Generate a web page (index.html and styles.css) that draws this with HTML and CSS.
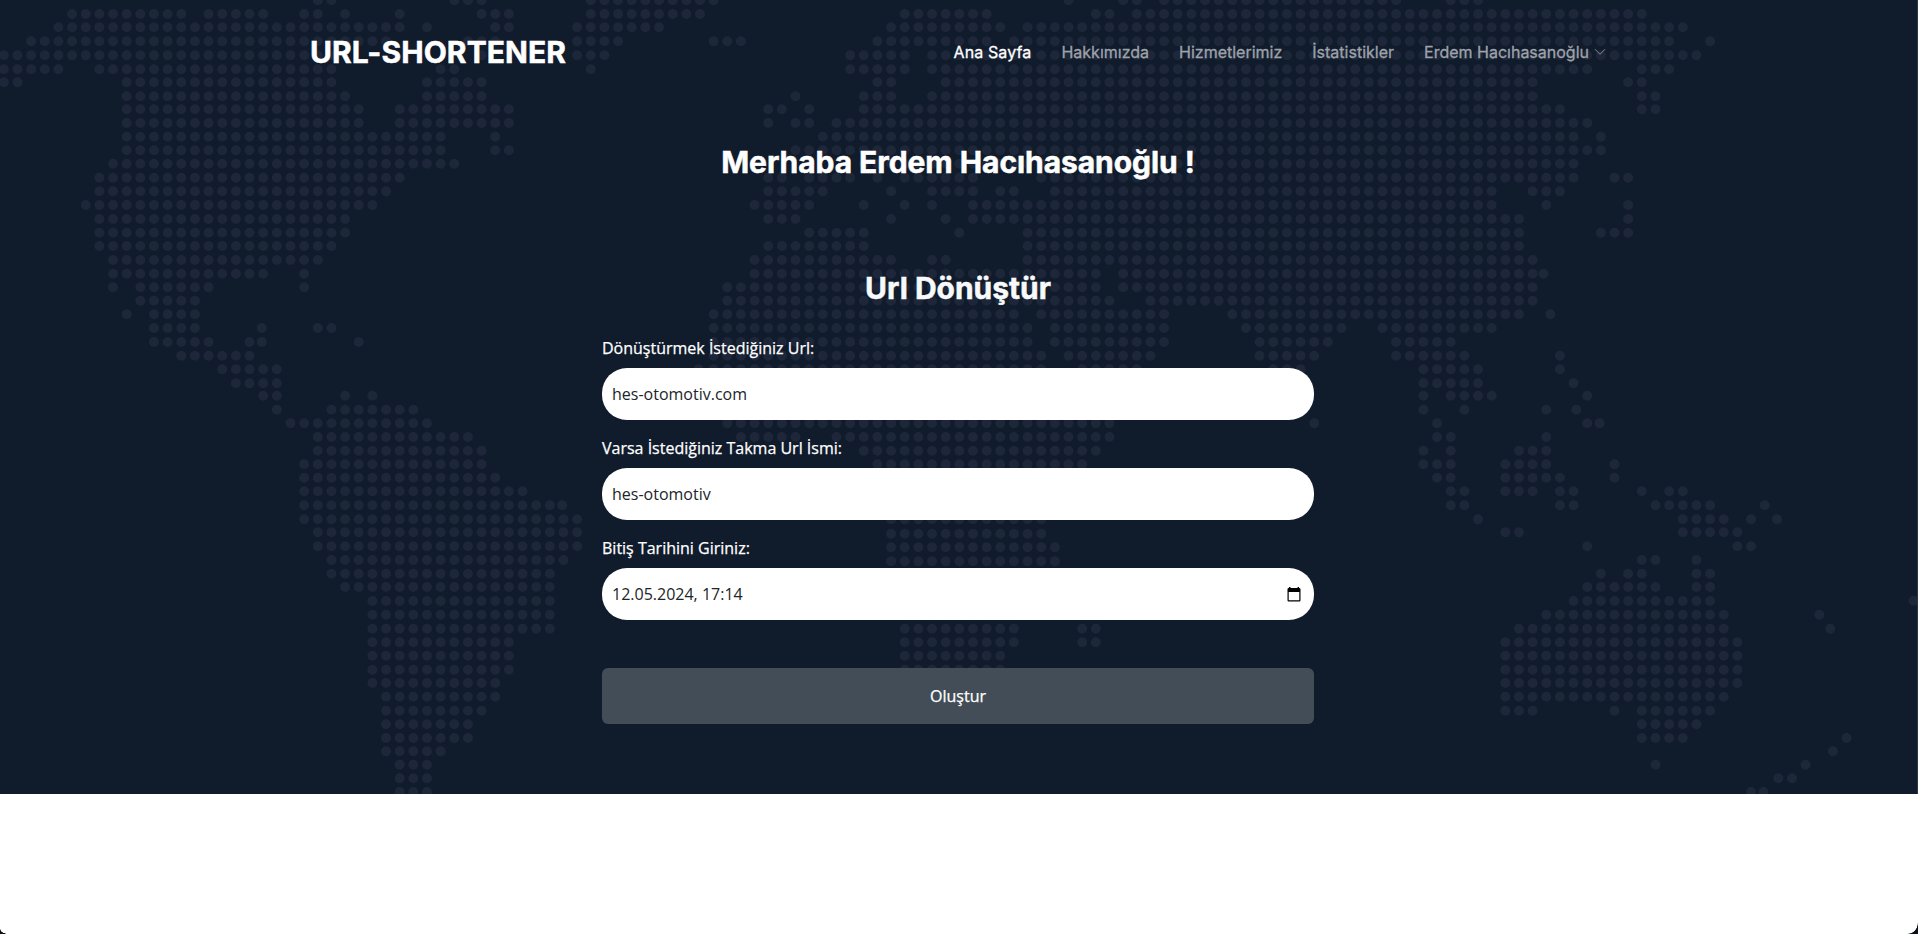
FILE: index.html
```html
<!DOCTYPE html>
<html lang="tr">
<head>
<meta charset="utf-8">
<title>URL-SHORTENER</title>
<link rel="stylesheet" href="styles.css">
</head>
<body>
<section class="hero">
  <svg class="map" id="map" width="1917" height="794" viewBox="0 0 1917 794" aria-hidden="true"></svg>
  <header class="header">
    <a class="logo">URL-SHORTENER</a>
    <nav class="nav">
      <a class="active">Ana Sayfa</a>
      <a>Hakkımızda</a>
      <a>Hizmetlerimiz</a>
      <a>İstatistikler</a>
      <a>Erdem Hacıhasanoğlu<svg class="chev" width="12" height="12" viewBox="0 0 16 16"><path d="M1.6 4.6 8 11l6.400-6.400" fill="none" stroke="currentColor" stroke-width="1.1" stroke-linecap="round" stroke-linejoin="round"/></svg></a>
    </nav>
  </header>
  <h2 class="hello">Merhaba Erdem Hacıhasanoğlu !</h2>
  <h2 class="title">Url Dönüştür</h2>
  <form class="form">
    <label>Dönüştürmek İstediğiniz Url:</label>
    <div class="field">hes-otomotiv.com</div>
    <label>Varsa İstediğiniz Takma Url İsmi:</label>
    <div class="field">hes-otomotiv</div>
    <label>Bitiş Tarihini Giriniz:</label>
    <div class="field"><span>12.05.2024, 17:14</span>
      <svg class="cal" width="14" height="15" viewBox="0 0 14 15"><path fill-rule="evenodd" d="M2 0h1.500v1h7V0H12v1h.5A1.200 1.200 0 0 1 13.500 2.200v11.100a1.200 1.200 0 0 1-1.200 1.200H1.700A1.200 1.200 0 0 1 .5 13.300V2.200A1.200 1.200 0 0 1 1.700 1H2zM1.700 5v8.200h10.600V5z"/></svg>
    </div>
    <button type="button">Oluştur</button>
  </form>
</section>
<i class="corner left"></i><i class="corner right"></i>
<script src="map.js"></script>
</body>
</html>
```
FILE: styles.css
```css
* { box-sizing: border-box; }
body {
  margin: 0;
  height: 934px;
  overflow: hidden;
  position: relative;
  background: #fff;
  font-family: "Open Sans", "Noto Sans", sans-serif;
  font-size: 16px;
  line-height: 24px;
}
.hero {
  position: relative;
  height: 794px;
  padding-right: 1px;
  border-right: 1px solid #2c3847;
  background: #101b2c;
  color: #fff;
}
.map { position: absolute; left: 0; top: 0; fill: #1e2739; }
.header {
  position: relative;
  width: 1296px;
  margin: 0 auto;
  height: 104px;
  display: flex;
  align-items: center;
  justify-content: space-between;
}
.logo {
  font: 700 30px/36px Inter, sans-serif;
  letter-spacing: 0.08px;
  -webkit-text-stroke: 0.5px currentColor;
}
.nav {
  display: flex;
  gap: 30px;
  font: 400 16px/24px Inter, sans-serif;
  color: #9ea3aa;
  -webkit-text-stroke: 0.3px currentColor;
}
.nav .active { color: #fff; letter-spacing: 0.12px; }
.chev { margin-left: 5px; }
.hello, .title {
  position: relative;
  margin: 0;
  text-align: center;
  font: 700 30px/36px Inter, sans-serif;
  -webkit-text-stroke: 0.5px currentColor;
}
.hello { padding-top: 40px; letter-spacing: -0.06px; }
.title { padding-top: 90px; color: #f8f9fa; }
.form {
  position: relative;
  width: 712px;
  margin: 30px auto 0;
  display: flex;
  flex-direction: column;
}
.form label { margin-bottom: 8px; -webkit-text-stroke: 0.25px currentColor; }
.field {
  height: 52px;
  margin-bottom: 16px;
  padding: 0 13px 0 10px;
  border-radius: 25px;
  background: #fff;
  color: #212529;
  display: flex;
  align-items: center;
  justify-content: space-between;
}
.cal { fill: #000; }
.form button {
  height: 56px;
  margin-top: 32px;
  border: 0;
  border-radius: 6px;
  background: #434d57;
  color: #fff;
  font: inherit;
  -webkit-text-stroke: 0.25px currentColor;
}
.corner { position: absolute; bottom: 0; }
.left { left: 0; width: 8px; height: 5px; background: radial-gradient(ellipse 8px 5px at 100% 0, transparent 92%, #0b1119 100%); }
.right { right: 0; width: 10px; height: 11px; background: radial-gradient(ellipse 10px 11px at 0 0, transparent 94%, #0b1119 100%); }
```
FILE: map.js
```js
// Each row: vertical centre (in thirds of a pixel) and the filled column ranges.
const rows = [
  [1, "23-24 33-35 43-52 78 82-83 85-102 106-108"],
  [42, "5-13 15-19 22-23 25 29 35-37 43-51 66-72 80-81 83-120"],
  [82, "4-29 31 36-37 42-48 65-73 75-123"],
  [124, "2-28 34-36 42-45 52-54 64-72 74-122 125"],
  [166, "0-24 35 42-44 62-66 68-124"],
  [208, "0-4 7-24 32-33 43 62-66 68-116 120-122"],
  [247, "0-1 9-24 31-35 64-65 69-112 119-120"],
  [289, "9-25 31-35 58 63-65 68-112 120-121"],
  [328, "9-26 29-37 56-57 59 63-114 120-121"],
  [369, "9-26 29-37 56 58-59 61-116"],
  [410, "9-32 36 60-115 117"],
  [451, "9-32 36-37 58-117"],
  [491, "8-33 63-115"],
  [533, "7-29 56-57 59-62 64 66-71 76-115 118-119"],
  [574, "7-28 56-60 65 68-71 73-74 77-109 112-114"],
  [615, "6-27 55-59 63 66 68 71-109 113 119"],
  [657, "7-25 56-58 65 69 71-111 119"],
  [698, "7-25 59-63 70 75-111 117-119"],
  [738, "7-24 56-63 75-111"],
  [780, "8-23 55-65 68-69 75-112"],
  [821, "8-19 22 55-80 82-112 112.8"],
  [862, "8 10-15 22 53-80 82-112"],
  [902, "10-14 53-81 84-112"],
  [943, "9 11-14 52-74 76-85 90-111 113.3"],
  [984, "11-14 18.9 23-24 52-75 77-85 91-98 101-109"],
  [1026, "11-15 18 18.9 26 52-75 77-85 92-97 102-106"],
  [1067, "13-18 52-76 78-84 92-96 102-107 114"],
  [1108, "16-20 50.9 52-76 79-83 93-95 104-108 114"],
  [1150, "17-20 104-108 115"],
  [1187, "19-20 25 27 104 106-109 116"],
  [1229, "20 24-30 104 107 113 115.2"],
  [1270, "21-31 53-81 96 105 116 116.9"],
  [1311, "23-34 54-58 61-81 105-106 113"],
  [1352, "23-35 63-80 104 106 111-113"],
  [1393, "22-35 64-79 104-106 110-113 118"],
  [1433, "22-36 105-106 110-114 118"],
  [1474, "22-38 106-107 110-112 114-115 120 122-123"],
  [1516, "22-40 40.9 106-107 114-115 121-125 129"],
  [1558, "22-42 65-76 108 123-126 128 129.9"],
  [1597, "23-42 110-111 123-127"],
  [1601, "65-76"],
  [1639, "23-42 116 127-128"],
  [1642, "65-77"],
  [1680, "24-41 120-121 124"],
  [1684, "65-77"],
  [1721, "24-40 117 119-120 124-125"],
  [1761, "25-40 116-121 124-125"],
  [1803, "27-40 115-125"],
  [1844, "27-40 113-126"],
  [1886, "27-40 66-74 79-80 111-126 133.800"],
  [1927, "27-37 66-74 79-80 110-127"],
  [1967, "27-37 66-73 110-127"],
  [2009, "27-37 66-73 110-127"],
  [2049, "27-36 110-127"],
  [2090, "28-36 110-126"],
  [2132, "28-35 110-112 118 120-125"],
  [2173, "28-34 120-124"],
  [2214, "28-34 120-123 135"],
  [2254, "28-32 134"],
  [2294, "29-31 121 132"],
  [2335, "29-31 130-131"],
  [2376, "29-31 128 128.900"],
  [1802, "139.900"],
  [1844, "133"]
];
let d = "";
for (const [y3, runs] of rows) {
  for (const run of runs.split(" ")) {
    const [a, b = a] = run.split("-").map(Number);
    for (let c = a; c <= b; c++) {
      const x = (11.5 + 40.95 * c) / 3 - 5;
      d += `M${x.toFixed(2)} ${(y3 / 3).toFixed(2)}a5 5 0 1 0 10 0a5 5 0 1 0-10 0`;
    }
  }
}
const path = document.createElementNS("http://www.w3.org/2000/svg", "path");
path.setAttribute("d", d);
document.getElementById("map").append(path);
```
